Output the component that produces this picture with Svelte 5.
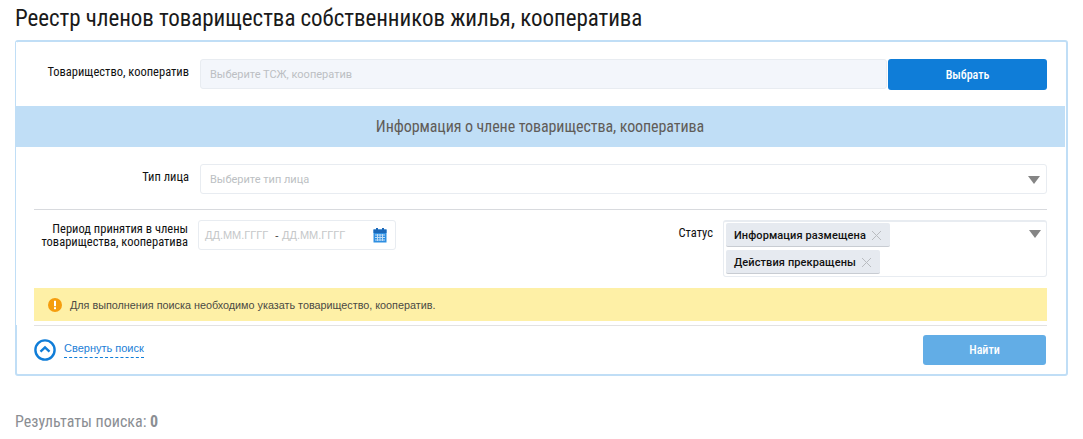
<script>
	const statuses = ["Информация размещена", "Действия прекращены"];
</script>

<div class="page">
	<h1>Реестр членов товарищества собственников жилья, кооператива</h1>

	<div class="panel">
		<div class="row top">
			<div class="label">Товарищество, кооператив</div>
			<div class="input filled">Выберите ТСЖ, кооператив</div>
			<button class="btn pick">Выбрать</button>
		</div>

		<div class="band">Информация о члене товарищества, кооператива</div>

		<div class="row type">
			<div class="label">Тип лица</div>
			<div class="input select">
				Выберите тип лица
				<span class="arrow"></span>
			</div>
		</div>

		<div class="rule"></div>

		<div class="row period">
			<div class="label two">Период принятия в члены<br />товарищества, кооператива</div>
			<div class="dates">
				<span class="ph">ДД.ММ.ГГГГ</span>
				<span class="dash">-</span>
				<span class="ph">ДД.ММ.ГГГГ</span>
				<svg class="cal" width="14" height="15" viewBox="0 0 14 15">
					<rect x="0.5" y="1.5" width="13" height="13" fill="#2e8fe2" />
					<rect x="0.5" y="1.5" width="13" height="3.5" fill="#1b68b8" />
					<rect x="3" y="0" width="2" height="3" fill="#1b68b8" />
					<rect x="9" y="0" width="2" height="3" fill="#1b68b8" />
					<path d="M2 7h10M2 9.5h10M2 12h10M4.5 6v7M7 6v7M9.5 6v7" stroke="#bfdcf5" stroke-width="1" />
				</svg>
			</div>
			<div class="status-label">Статус</div>
			<div class="status">
				{#each statuses as s}
					<div class="tag">
						<span>{s}</span>
						<svg width="11" height="11" viewBox="0 0 11 11">
							<path d="M1 1l9 9M10 1l-9 9" stroke="#b9bcc0" stroke-width="1" fill="none" />
						</svg>
					</div>
				{/each}
				<span class="arrow"></span>
			</div>
		</div>

		<div class="notice">
			<svg width="14" height="14" viewBox="0 0 14 14">
				<circle cx="7" cy="7" r="7" fill="#f59d0e" />
				<rect x="6" y="2.8" width="2" height="5.4" fill="#fff" />
				<rect x="6" y="9.2" width="2" height="2" fill="#fff" />
			</svg>
			<span>Для выполнения поиска необходимо указать товарищество, кооператив.</span>
		</div>

		<div class="actions">
			<div class="collapse">
				<svg width="22" height="22" viewBox="0 0 22 22">
					<circle cx="11" cy="11" r="9.6" fill="none" stroke="#0f7dd8" stroke-width="2.4" />
					<path d="M6.5 12.6L11 8.4l4.5 4.2" fill="none" stroke="#0f7dd8" stroke-width="2.4" />
				</svg>
				<span class="link">Свернуть поиск</span>
			</div>
			<button class="btn find">Найти</button>
		</div>
	</div>

	<div class="results">Результаты поиска: <b>0</b></div>
</div>

<style>
	:global(body) {
		margin: 0;
		background: #fff;
	}

	.page {
		width: 1083px;
		height: 439px;
		padding: 7px 0 0 15px;
		box-sizing: border-box;
		font-family: Roboto, "Liberation Sans", sans-serif;
		overflow: hidden;
	}

	h1 {
		margin: 0 0 9px;
		font-size: 23px;
		letter-spacing: -0.06px;
		line-height: 24px;
		font-weight: 400;
		font-stretch: 75%;
		color: #1a1a1a;
		white-space: nowrap;
	}

	.panel {
		width: 1053px;
		height: 336px;
		box-sizing: border-box;
		border: 2px solid #c0def6;
		border-radius: 3px;
		position: relative;
	}

	.panel::before {
		content: "";
		position: absolute;
		left: -1px;
		top: 0;
		width: 1px;
		height: 283px;
		background: #fff;
	}

	.row {
		display: flex;
		padding: 0 19px 0 17px;
	}

	.top {
		padding-top: 17px;
		height: 64px;
		box-sizing: border-box;
	}

	.label {
		width: 155px;
		flex: none;
		margin-right: 11px;
		text-align: right;
		font-size: 12.5px;
		font-stretch: 75%;
		line-height: 13px;
		padding-top: 6px;
		color: #111;
		white-space: nowrap;
	}

	.input {
		flex: 1;
		height: 30px;
		box-sizing: border-box;
		border: 1px solid #e8ecf1;
		border-radius: 3px;
		padding-left: 9px;
		font-size: 11px;
		line-height: 29px;
		color: #bcbfc3;
		position: relative;
	}

	.filled {
		background: #f3f6fb;
	}

	.btn {
		border: 0;
		border-radius: 3px;
		color: #fff;
		font-family: inherit;
		font-size: 12px;
		font-stretch: 75%;
		font-weight: 500;
		padding: 0;
	}

	.pick {
		width: 159px;
		height: 31px;
		margin-left: 1px;
		background: #0f7dd8;
	}

	.band {
		height: 41px;
		margin: 0 1px 0 -2px;
		position: relative;
		background: #c0def6;
		text-align: center;
		font-size: 16px;
		letter-spacing: -0.08px;
		font-stretch: 75%;
		line-height: 41px;
		color: #605c58;
		white-space: nowrap;
	}

	.type {
		padding-top: 17px;
		height: 62px;
		box-sizing: border-box;
	}

	.arrow {
		position: absolute;
		top: 11px;
		right: 6px;
		width: 0;
		height: 0;
		border-left: 6px solid transparent;
		border-right: 6px solid transparent;
		border-top: 8px solid #858585;
	}

	.rule {
		height: 1px;
		margin: 0 19px 0 17px;
		background: #d8dade;
	}

	.period {
		padding-top: 10px;
		height: 78px;
		box-sizing: border-box;
	}

	.two {
		width: 154px;
		margin-right: 10px;
		padding-top: 2px;
	}

	.dates {
		width: 198px;
		height: 30px;
		box-sizing: border-box;
		border: 1px solid #e8ecf1;
		border-radius: 3px;
		display: flex;
		align-items: center;
		padding-left: 6px;
		font-family: "Liberation Sans", sans-serif;
		font-size: 11px;
		position: relative;
		color: #444;
	}

	.ph {
		color: #c5c7c9;
		width: 68px;
	}

	.dash {
		width: 7px;
		padding-left: 2px;
	}

	.cal {
		position: absolute;
		right: 8px;
		top: 7px;
	}

	.status-label {
		width: 317px;
		flex: none;
		text-align: right;
		font-size: 12.5px;
		font-stretch: 75%;
		padding-top: 6px;
		line-height: 13px;
		color: #111;
	}

	.status {
		margin-left: 10px;
		flex: 1;
		height: 57px;
		box-sizing: border-box;
		border: 1px solid #e8ecf1;
		border-top-width: 2px;
		border-radius: 3px;
		padding: 1px 2px;
		position: relative;
	}

	.status .arrow {
		top: 8px;
		right: 5px;
	}

	.tag {
		display: flex;
		width: fit-content;
		align-items: center;
		gap: 5px;
		height: 24px;
		box-sizing: border-box;
		padding: 1px 8px 0 8px;
		margin-bottom: 3px;
		background: #e6eaf0;
		border-bottom: 1px solid #c8ccd2;
		border-radius: 2px;
		font-size: 11px;
		letter-spacing: 0.1px;
		font-weight: 500;
		color: #111;
	}

	.notice {
		display: flex;
		align-items: center;
		gap: 8px;
		height: 33px;
		margin: 0 19px 0 17px;
		padding-left: 14px;
		background: #fef0a6;
		font-family: "Liberation Sans", sans-serif;
		font-size: 10.8px;
		color: #4a4a44;
	}

	.actions {
		display: flex;
		justify-content: space-between;
		margin: 4px 19px 0 17px;
		padding: 9px 1px 0 1px;
		border-top: 1px solid #e2e2e2;
	}

	.collapse {
		display: flex;
		align-items: flex-start;
		gap: 8px;
		padding-top: 4px;
		margin-left: -1px;
		font-family: "Liberation Sans", sans-serif;
		font-size: 11px;
	}

	.link {
		color: #1c7ed6;
		border-bottom: 1px dashed #0f7dd8;
		line-height: 13px;
		padding-bottom: 2px;
		margin-top: 3px;
	}

	.find {
		width: 123px;
		height: 30px;
		background: #62ade6;
	}

	.results {
		margin-top: 37px;
		font-size: 16px;
		font-stretch: 75%;
		line-height: 18px;
		color: #8b8e93;
		white-space: nowrap;
	}
</style>
